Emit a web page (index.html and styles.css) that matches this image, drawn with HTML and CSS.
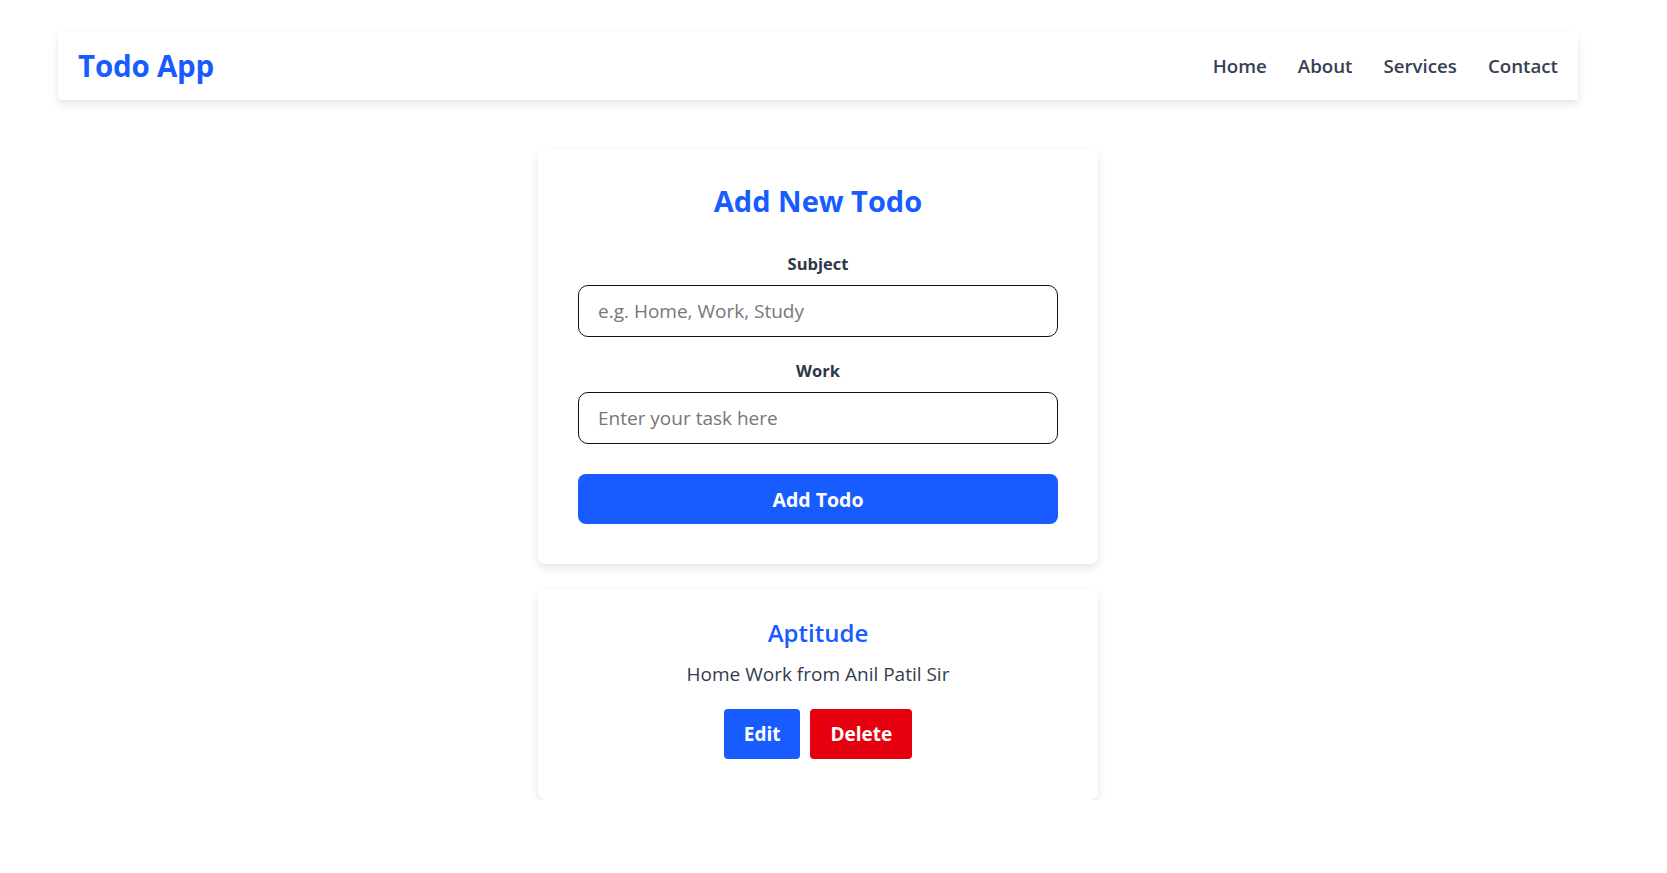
FILE: index.html
```html
<!DOCTYPE html>
<html lang="en">
<head>
<meta charset="utf-8">
<title>Todo App</title>
<link rel="stylesheet" href="styles.css">
</head>
<body>
<div class="page">
  <nav class="navbar">
    <div class="brand">Todo App</div>
    <ul class="nav-links">
      <li><a href="#">Home</a></li>
      <li><a href="#">About</a></li>
      <li><a href="#">Services</a></li>
      <li><a href="#">Contact</a></li>
    </ul>
  </nav>
  <main class="main">
    <form class="card form-card">
      <h2 class="form-title">Add New Todo</h2>
      <div class="field">
        <label class="field-label" for="subject">Subject</label>
        <input class="field-input" id="subject" type="text" placeholder="e.g. Home, Work, Study">
      </div>
      <div class="field">
        <label class="field-label" for="work">Work</label>
        <input class="field-input" id="work" type="text" placeholder="Enter your task here">
      </div>
      <button type="button" class="btn btn-primary btn-block">Add Todo</button>
    </form>
    <div class="card todo-card">
      <h3 class="todo-subject">Aptitude</h3>
      <p class="todo-work">Home Work from Anil Patil Sir</p>
      <div class="todo-actions">
        <button type="button" class="btn btn-primary btn-small">Edit</button>
        <button type="button" class="btn btn-danger btn-small">Delete</button>
      </div>
    </div>
  </main>
</div>
</body>
</html>
```

FILE: styles.css
```css
* {
  box-sizing: border-box;
}

html, body {
  margin: 0;
  padding: 0;
  background: #ffffff;
}

body {
  font-family: "Open Sans", "Noto Sans", "Liberation Sans", sans-serif;
  color: #333c4e;
}

.page {
  width: 1636px;
  padding-top: 32px;
}

.navbar {
  margin: 0 58px;
  height: 68px;
  padding: 0 20px 2px;
  display: flex;
  align-items: center;
  justify-content: space-between;
  background: #fff;
  border-radius: 4px;
  box-shadow: 0 4px 8px rgba(0, 0, 0, 0.1);
}

.brand {
  font-size: 29.5px;
  font-weight: 700;
  color: #185cff;
  letter-spacing: -0.2px;
}

.nav-links {
  list-style: none;
  margin: 0;
  padding: 0;
  display: flex;
  gap: 31px;
}

.nav-links a {
  text-decoration: none;
  color: #364052;
  font-size: 18.7px;
  font-weight: 600;
}

.main {
  display: flex;
  flex-direction: column;
  align-items: center;
  padding-top: 50px;
  gap: 25px;
}

.card {
  width: 560px;
  background: #fff;
  border-radius: 8px;
  box-shadow: 0 4px 10px rgba(0, 0, 0, 0.11);
}

.form-card {
  padding: 32px 40px 40px;
  display: flex;
  flex-direction: column;
}

.form-title {
  margin: 0 0 32px;
  height: 38px;
  line-height: 38px;
  text-align: center;
  font-size: 29px;
  font-weight: 700;
  color: #185cff;
}

.field {
  display: flex;
  flex-direction: column;
  margin-bottom: 22px;
}

.field-label {
  height: 24px;
  line-height: 24px;
  margin-bottom: 9px;
  text-align: center;
  font-size: 16.5px;
  font-weight: 700;
  color: #2e3748;
}

.field-input {
  height: 52px;
  padding: 0 19px;
  border: 1px solid #111;
  border-radius: 10px;
  font-family: inherit;
  font-size: 19px;
  color: #333;
  outline: none;
}

.field-input::placeholder {
  color: #777777;
}

.btn {
  border: none;
  color: #fff;
  font-family: inherit;
  font-weight: 700;
  cursor: pointer;
}

.btn-primary {
  background: #185cff;
}

.btn-danger {
  background: #e6000f;
}

.btn-block {
  margin-top: 8px;
  height: 50px;
  border-radius: 8px;
  font-size: 19.5px;
}

.todo-card {
  padding: 29px 40px 41px;
  display: flex;
  flex-direction: column;
  align-items: center;
}

.todo-subject {
  margin: 0;
  height: 29px;
  line-height: 29px;
  font-size: 24px;
  font-weight: 600;
  color: #185cff;
}

.todo-work {
  margin: 15px 0 23px;
  height: 24px;
  line-height: 24px;
  font-size: 19px;
  color: #333c4e;
}

.todo-actions {
  display: flex;
  gap: 10px;
}

.btn-small {
  height: 50px;
  padding: 0 20px;
  border-radius: 4px;
  font-size: 19px;
}
```
